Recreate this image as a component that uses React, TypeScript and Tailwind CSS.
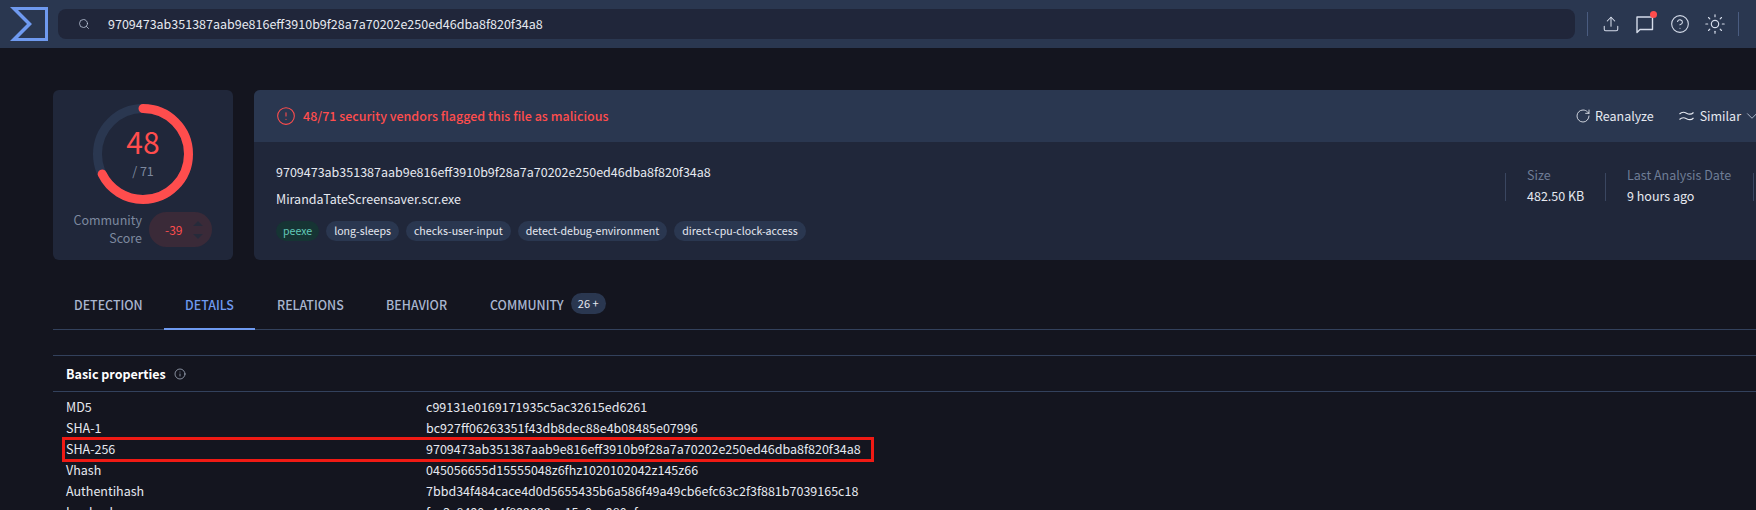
import { Upload, CircleHelp, Sun, RotateCw, ChevronDown, CircleAlert, Info, Search } from "lucide-react";

const tags = ["long-sleeps", "checks-user-input", "detect-debug-environment", "direct-cpu-clock-access"];
const rows: [string, string][] = [
  ["MD5", "c99131e0169171935c5ac32615ed6261"],
  ["SHA-1", "bc927ff06263351f43db8dec88e4b08485e07996"],
  ["SHA-256", "9709473ab351387aab9e816eff3910b9f28a7a70202e250ed46dba8f820f34a8"],
  ["Vhash", "045056655d15555048z6fhz1020102042z145z66"],
  ["Authentihash", "7bbd34f484cace4d0d5655435b6a586f49a49cb6efc63c2f3f881b7039165c18"],
  ["Imphash", "fac2c8490a44f899099ea15c0ae980af"],
];

function Logo() {
  return (
    <svg width="38" height="34" viewBox="0 0 38 34" className="shrink-0">
      <path fillRule="evenodd" fill="#6f9af0" d="M0 0H38V34H0L17 17ZM8 3L22 17L8 31H35V3Z" />
    </svg>
  );
}

function Chat() {
  return (
    <svg width="20" height="20" viewBox="0 0 20 20" fill="none" stroke="#d5dcea" strokeWidth="1.4">
      <path d="M2 18.5V3H17.5V15.5H5Z" strokeLinejoin="round" />
    </svg>
  );
}

function Wave() {
  return (
    <svg width="15" height="10" viewBox="0 0 15 10" fill="none" stroke="#e4e8f0" strokeWidth="1.1">
      <path d="M0.5 3C3 0.5 5 0.8 7.5 2.2S12 4 14.5 1.5" />
      <path d="M0.5 8.5C3 6 5 6.3 7.5 7.7S12 9.5 14.5 7" />
    </svg>
  );
}

function Gauge() {
  const r = 45.5;
  const c = 2 * Math.PI * r;
  return (
    <svg width="100" height="100" viewBox="0 0 100 100" className="absolute inset-0 -rotate-90">
      <circle cx="50" cy="50" r={r} fill="none" stroke="#2a3750" strokeWidth="9" />
      <circle cx="50" cy="50" r={r} fill="none" stroke="#ff4d4d" strokeWidth="9" strokeLinecap="round" strokeDasharray={`${c * 0.676} ${c}`} />
    </svg>
  );
}

export default function App() {
  return (
    <div className="relative w-[1756px] h-[510px] overflow-hidden bg-[#14151f] text-[#e6e9f0] font-['Noto_Sans_CJK_SC','Noto_Sans',sans-serif] text-[12.5px] leading-5">
      <header className="h-12 bg-[#2a3750] flex items-center pl-2.5">
        <Logo />
        <div className="ml-2.5 w-[1517px] h-[30px] rounded-lg bg-[#20263a] flex items-center pl-5 shrink-0">
          <Search size={12} strokeWidth={1.5} className="text-[#c3cde0]" />
          <span className="ml-[18px]">9709473ab351387aab9e816eff3910b9f28a7a70202e250ed46dba8f820f34a8</span>
        </div>
        <div className="ml-3 h-6 border-l border-[#4a5c80] flex items-center text-[#d5dcea]">
          <div className="w-[45px] flex justify-center"><Upload size={18} strokeWidth={1.4} /></div>
          <div className="relative w-[24px] flex justify-center">
            <Chat />
            <span className="absolute -top-[3px] right-[0px] w-[7px] h-[7px] rounded-full bg-[#ff4d4d]" />
          </div>
          <div className="w-[46px] flex justify-center"><CircleHelp size={20} strokeWidth={1.3} /></div>
          <div className="w-[24px] flex justify-center"><Sun size={22} strokeWidth={1.3} /></div>
          <div className="ml-[11px] h-6 border-l border-[#4a5c80]" />
        </div>
      </header>

      <main className="pl-[53px]">
        <section className="flex gap-[21px] pt-[42px]">
          <div className="w-[180px] h-[170px] shrink-0 rounded-md bg-[#20273a] pt-[14px] flex flex-col items-center">
            <div className="relative w-[100px] h-[100px] shrink-0 flex flex-col items-center">
              <Gauge />
              <span className="mt-[19px] text-[30px] leading-9 text-[#ff4d4d]">48</span>
              <span className="mt-[2px] text-[12.5px] leading-5 text-[#7d899f]">/ 71</span>
            </div>
            <div className="mt-[6px] flex items-center self-start">
              <span className="ml-[13px] w-[76px] text-right text-[12.5px] leading-[18px] text-[#7d899f]">Community Score</span>
              <div className="ml-[7px] mt-[2px] w-[63px] h-[35px] rounded-full bg-[#3a2a38] flex items-center pl-[16px]">
                <span className="text-[#ff4d4d] text-[12px] w-[25px]">-39</span>
                <div className="flex flex-col gap-[8px] ml-[3px]">
                  <span className="w-0 h-0 border-x-[5px] border-x-transparent border-b-[5px] border-b-[#262a3a]" />
                  <span className="w-0 h-0 border-x-[5px] border-x-transparent border-t-[5px] border-t-[#262a3a]" />
                </div>
              </div>
            </div>
          </div>

          <div className="w-[1520px] h-[170px] shrink-0 rounded-md bg-[#20273a] overflow-hidden">
            <div className="h-[52px] bg-[#2a3750] flex items-center pl-6 pr-[13px]">
              <CircleAlert size={20} strokeWidth={1.3} className="-ml-[2px] text-[#ff4d4d]" />
              <span className="ml-[7px] font-medium text-[#ff4d4d] whitespace-nowrap">48/71 security vendors flagged this file as malicious</span>
              <RotateCw size={16} strokeWidth={1.3} className="ml-auto" />
              <span className="ml-1">Reanalyze</span>
              <span className="ml-[25px]"><Wave /></span>
              <span className="ml-1.5">Similar</span>
              <ChevronDown size={18} strokeWidth={1.1} className="ml-0.5 text-[#c3cde0]" />
            </div>
            <div className="flex pl-[22px]">
              <div className="w-[1229px] shrink-0">
                <div className="mt-5 leading-5">9709473ab351387aab9e816eff3910b9f28a7a70202e250ed46dba8f820f34a8</div>
                <div className="mt-[7px] leading-5">MirandaTateScreensaver.scr.exe</div>
                <div className="mt-[12px] flex gap-[7px] text-[10.6px]">
                  <span className="h-5 leading-5 px-[7px] rounded-full bg-[#163434] text-[#62c8b8]">peexe</span>
                  {tags.map((t) => (
                    <span key={t} className="h-5 leading-5 px-[8px] rounded-full bg-[#2a3750] text-[#e6e9f0]">{t}</span>
                  ))}
                </div>
              </div>
              <div className="mt-[31px] h-7 flex">
                <div className="w-[100px] border-l border-[#3a4660] pl-[21px]">
                  <div className="text-[#6f7d96] leading-[14px] -mt-[5px]">Size</div>
                  <div className="mt-[7px] leading-[14px]">482.50 KB</div>
                </div>
                <div className="w-[148px] border-l border-[#3a4660] pl-[21px]">
                  <div className="text-[#6f7d96] leading-[14px] -mt-[5px]">Last Analysis Date</div>
                  <div className="mt-[7px] leading-[14px]">9 hours ago</div>
                </div>
                <div className="border-l border-[#3a4660]" />
              </div>
            </div>
          </div>
        </section>

        <nav className="mt-[35px] h-[35px] flex border-b border-[#33415c] text-[12.4px] font-medium text-[#a9b6cf]">
          <span className="pl-[21px] w-[111px] leading-[20px]">DETECTION</span>
          <span className="w-[91px] text-center border-b-2 border-[#6f9af0] text-[#6f9af0] h-[35px]">DETAILS</span>
          <span className="ml-[22px] w-[109px]">RELATIONS</span>
          <span className="w-[104px]">BEHAVIOR</span>
          <span>COMMUNITY</span>
          <span className="ml-[7px] -mt-0.5 h-[21px] w-[35px] rounded-full bg-[#2a3750] text-[#e6e9f0] text-[11px] leading-[21px] text-center font-normal">26 +</span>
        </nav>

        <section className="mt-[25px] border-t border-[#33415c]">
          <div className="h-9 pl-[13px] flex items-center border-b border-[#33415c] font-bold text-[12.5px] text-white">
            Basic properties
            <Info size={12} strokeWidth={1.3} className="ml-2 text-[#c3cde0]" />
          </div>
          <div className="pt-[6px] pl-[13px]">
            {rows.map(([k, v]) => (
              <div key={k} className="h-[21px] flex items-center text-[12.5px] -translate-y-0.5">
                <span className="w-[360px] shrink-0">{k}</span>
                <span>{v}</span>
              </div>
            ))}
          </div>
        </section>
      </main>

      <div className="absolute left-[62px] top-[437px] w-[812px] h-[25px] border-[3px] border-[#f01a14]" />
    </div>
  );
}
